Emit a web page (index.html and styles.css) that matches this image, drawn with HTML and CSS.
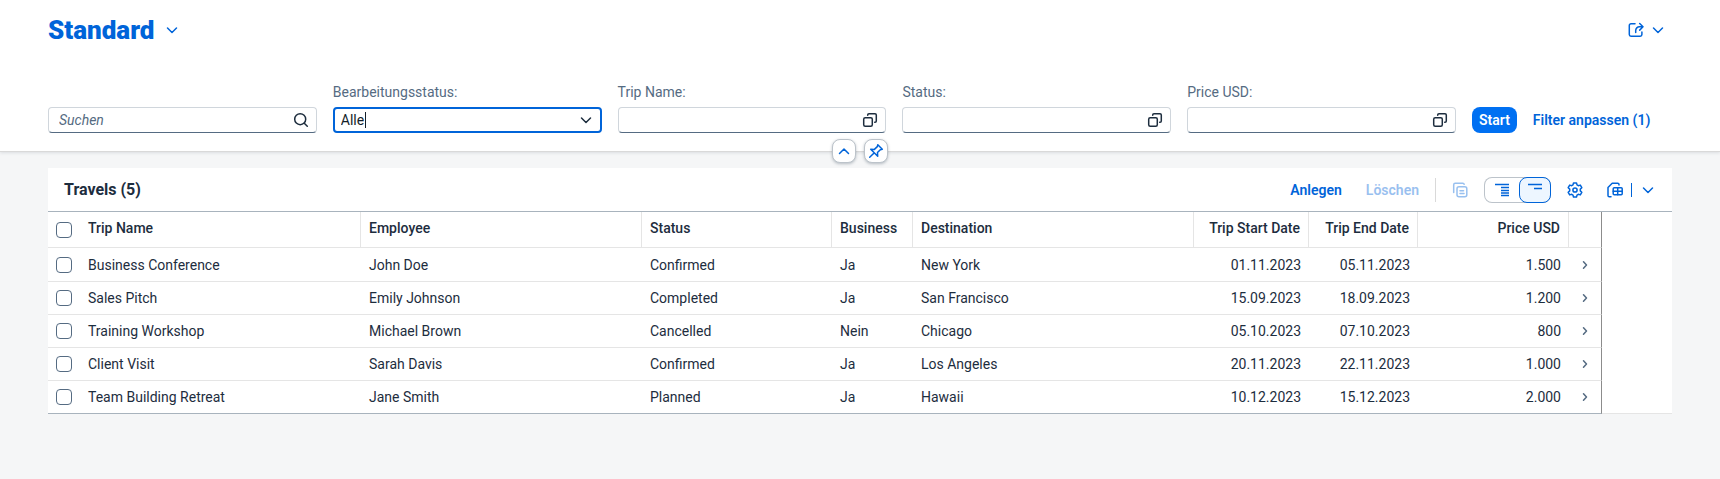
FILE: index.html
```html
<!DOCTYPE html>
<html lang="de">
<head>
<meta charset="utf-8">
<meta name="viewport" content="width=device-width, initial-scale=1">
<title>Travels</title>
<link rel="stylesheet" href="styles.css">
</head>
<body>
<svg class="sprite" aria-hidden="true">
  <symbol id="down" viewBox="0 0 16 16"><path d="M3.500 6l4.500 4.500L12.500 6"/></symbol>
  <symbol id="up" viewBox="0 0 16 16"><path d="M3.500 10.500L8 6l4.500 4.500"/></symbol>
  <symbol id="next" viewBox="0 0 16 16"><path d="M6.500 4.700L9.500 8l-3 3.300"/></symbol>
  <symbol id="search" viewBox="0 0 16 16"><circle cx="7.200" cy="7.200" r="5.500"/><path d="M11.300 11.300l3 3"/></symbol>
  <symbol id="help" viewBox="0 0 16 16"><rect x="1.700" y="5.700" width="8.600" height="8.600" rx="1.500"/><path d="M5.700 3.200V3A1.300 1.300 0 0 1 7 1.700h6A1.300 1.300 0 0 1 14.300 3v6A1.300 1.300 0 0 1 13 10.300h-.3"/></symbol>
  <symbol id="share" viewBox="0 0 16 16"><path d="M7 1.700H3A1.700 1.700 0 0 0 1.300 3.400v9.200A1.700 1.700 0 0 0 3 14.300h9.200a1.700 1.700 0 0 0 1.700-1.700V10M7.700 10.500V8.500a3.700 3.700 0 0 1 3.700-3.700h3M11.700 1.500L15 4.800l-3.300 3.300"/></symbol>
  <symbol id="pin" viewBox="0 0 16 16"><path d="M9.800 1.700l4.500 4.500-2 .5-2.800 2.800.2 3.700-7-7 3.700.2 2.900-2.800zM5.800 10.200L1.700 14.300"/></symbol>
  <symbol id="copy" viewBox="0 0 16 16"><path d="M1.700 10.500V2.800a1.500 1.500 0 0 1 1.500-1.500h7.500a1.500 1.500 0 0 1 1.500 1"/><rect x="5" y="4.700" width="9.800" height="10" rx="2"/><path d="M8 8.700h3.500M8 11.500h4"/></symbol>
  <symbol id="expanded" viewBox="0 0 16 16"><path d="M1 2.500h14M7 5.500h8M7 8.500h8M7 11h8M7 13.500h8"/></symbol>
  <symbol id="collapsed" viewBox="0 0 16 16"><path d="M1 2.500h14M7 6.500h8"/></symbol>
  <symbol id="gear" viewBox="0 0 16 16"><path d="M6.500.9h3l.5 2 1.300.8 2-.6 1.500 2.600-1.500 1.400v1.800l1.500 1.400-1.500 2.600-2-.6-1.300.8-.5 2h-3l-.5-2-1.300-.8-2 .6-1.500-2.600 1.500-1.400V7.100L1.200 5.700l1.500-2.600 2 .6L6 2.900z"/><circle cx="8" cy="8" r="2.100"/></symbol>
  <symbol id="export" viewBox="0 0 16 16"><path d="M4 14.700H2.300a1.300 1.300 0 0 1-1.300-1.300V5.500l4.200-4.200h5.500A1.300 1.300 0 0 1 12 2.600v.4"/><rect x="6.200" y="5.800" width="9" height="7" rx="1"/><path d="M6.200 9.300h9M10.700 5.800v7"/></symbol>
</svg>

<header class="page-header">
  <div class="title-bar">
    <h1 class="variant"><button class="variant-button" type="button">Standard<svg class="icon" aria-hidden="true"><use href="#down"/></svg></button></h1>
    <button class="share" type="button" aria-label="Teilen"><svg class="icon"><use href="#share"/></svg><svg class="icon"><use href="#down"/></svg></button>
  </div>
  <form class="filters">
    <div class="field">
      <div class="control">
        <input class="input search-input" type="search" placeholder="Suchen" aria-label="Suchen">
        <button class="field-icon" type="button" aria-label="Suche starten"><svg class="icon"><use href="#search"/></svg></button>
      </div>
    </div>
    <div class="field">
      <label class="label" for="edit-status">Bearbeitungsstatus:</label>
      <div class="control">
        <input class="input focused" id="edit-status" type="text" role="combobox" aria-expanded="false" value="Alle">
        <span class="caret"></span>
        <button class="field-icon" type="button" aria-label="Auswahl öffnen"><svg class="icon"><use href="#down"/></svg></button>
      </div>
    </div>
    <div class="field">
      <label class="label" for="trip-name">Trip Name:</label>
      <div class="control">
        <input class="input" id="trip-name" type="text">
        <button class="field-icon" type="button" aria-label="Wertehilfe Trip Name"><svg class="icon"><use href="#help"/></svg></button>
      </div>
    </div>
    <div class="field">
      <label class="label" for="status">Status:</label>
      <div class="control">
        <input class="input" id="status" type="text">
        <button class="field-icon" type="button" aria-label="Wertehilfe Status"><svg class="icon"><use href="#help"/></svg></button>
      </div>
    </div>
    <div class="field">
      <label class="label" for="price">Price USD:</label>
      <div class="control">
        <input class="input" id="price" type="text">
        <button class="field-icon" type="button" aria-label="Wertehilfe Price USD"><svg class="icon"><use href="#help"/></svg></button>
      </div>
    </div>
    <div class="filter-actions">
      <button class="go" type="button">Start</button>
      <button class="text-button" type="button">Filter anpassen (1)</button>
    </div>
  </form>
  <div class="header-toggles">
    <button class="toggle" type="button" aria-label="Kopf ausblenden"><svg class="icon"><use href="#up"/></svg></button>
    <button class="toggle" type="button" aria-label="Kopf anheften"><svg class="icon"><use href="#pin"/></svg></button>
  </div>
</header>

<main class="content">
  <div class="toolbar">
    <h2 class="table-title">Travels (5)</h2>
    <div class="tools">
      <button class="text-button" type="button">Anlegen</button>
      <button class="text-button" type="button" disabled>Löschen</button>
      <span class="separator"></span>
      <button class="icon-button" type="button" aria-label="Kopieren" disabled><svg class="icon"><use href="#copy"/></svg></button>
      <div class="segmented">
        <button class="segment" type="button" aria-label="Mehr Spalten"><svg class="icon"><use href="#expanded"/></svg></button>
        <button class="segment selected" type="button" aria-label="Weniger Spalten" aria-pressed="true"><svg class="icon"><use href="#collapsed"/></svg></button>
      </div>
      <button class="icon-button settings" type="button" aria-label="Einstellungen"><svg class="icon"><use href="#gear"/></svg></button>
      <div class="export">
        <button class="icon-button" type="button" aria-label="Exportieren"><svg class="icon"><use href="#export"/></svg></button>
        <span class="split"></span>
        <button class="icon-button" type="button" aria-label="Exportoptionen"><svg class="icon"><use href="#down"/></svg></button>
      </div>
    </div>
  </div>
  <table class="table">
    <colgroup>
      <col class="col-check"><col class="col-wide"><col class="col-wide"><col class="col-status"><col class="col-business"><col class="col-wide"><col class="col-start"><col class="col-end"><col class="col-price"><col class="col-nav"><col>
    </colgroup>
    <thead>
      <tr><th class="check"><input class="checkbox" type="checkbox" aria-label="Alle auswählen"></th><th>Trip Name</th><th>Employee</th><th>Status</th><th>Business</th><th>Destination</th><th class="num">Trip Start Date</th><th class="num">Trip End Date</th><th class="num">Price USD</th><th class="nav"></th><th class="filler"></th></tr>
    </thead>
    <tbody>
      <tr><td class="check"><input class="checkbox" type="checkbox" aria-label="Business Conference"></td><td>Business Conference</td><td>John Doe</td><td>Confirmed</td><td>Ja</td><td>New York</td><td class="num">01.11.2023</td><td class="num">05.11.2023</td><td class="num">1.500</td><td class="nav"><svg class="icon"><use href="#next"/></svg></td><td class="filler"></td></tr>
      <tr><td class="check"><input class="checkbox" type="checkbox" aria-label="Sales Pitch"></td><td>Sales Pitch</td><td>Emily Johnson</td><td>Completed</td><td>Ja</td><td>San Francisco</td><td class="num">15.09.2023</td><td class="num">18.09.2023</td><td class="num">1.200</td><td class="nav"><svg class="icon"><use href="#next"/></svg></td><td class="filler"></td></tr>
      <tr><td class="check"><input class="checkbox" type="checkbox" aria-label="Training Workshop"></td><td>Training Workshop</td><td>Michael Brown</td><td>Cancelled</td><td>Nein</td><td>Chicago</td><td class="num">05.10.2023</td><td class="num">07.10.2023</td><td class="num">800</td><td class="nav"><svg class="icon"><use href="#next"/></svg></td><td class="filler"></td></tr>
      <tr><td class="check"><input class="checkbox" type="checkbox" aria-label="Client Visit"></td><td>Client Visit</td><td>Sarah Davis</td><td>Confirmed</td><td>Ja</td><td>Los Angeles</td><td class="num">20.11.2023</td><td class="num">22.11.2023</td><td class="num">1.000</td><td class="nav"><svg class="icon"><use href="#next"/></svg></td><td class="filler"></td></tr>
      <tr><td class="check"><input class="checkbox" type="checkbox" aria-label="Team Building Retreat"></td><td>Team Building Retreat</td><td>Jane Smith</td><td>Planned</td><td>Ja</td><td>Hawaii</td><td class="num">10.12.2023</td><td class="num">15.12.2023</td><td class="num">2.000</td><td class="nav"><svg class="icon"><use href="#next"/></svg></td><td class="filler"></td></tr>
    </tbody>
  </table>
</main>
</body>
</html>
```

FILE: styles.css
```css
:root {
  --blue: #0064d9;
  --text: #1d2d3e;
  --label: #556b82;
  --line: #e5e5e5;
  --strong-line: #a8b3bd;
}

* { box-sizing: border-box; }

body {
  margin: 0;
  background: #f5f6f7;
  color: var(--text);
  font: 14px/16px Roboto, "Liberation Sans", sans-serif;
}

button {
  margin: 0;
  padding: 0;
  border: 0;
  background: none;
  color: var(--blue);
  font: inherit;
  cursor: pointer;
}

button:disabled { opacity: 0.4; cursor: default; }

.sprite { position: absolute; width: 0; height: 0; }

.icon {
  display: block;
  flex: none;
  width: 16px;
  height: 16px;
  fill: none;
  stroke: currentColor;
  stroke-width: 1.5;
  stroke-linecap: round;
  stroke-linejoin: round;
}

.page-header {
  position: relative;
  padding: 14px 48px 18px;
  border-bottom: 1px solid #d9d9d9;
  background: #fff;
  box-shadow: 0 1px 3px rgba(34, 53, 72, 0.12);
}

.title-bar {
  display: flex;
  align-items: center;
  justify-content: space-between;
}

.variant { margin: 0; }

.variant-button {
  display: flex;
  align-items: center;
  gap: 10px;
  font-size: 26px;
  font-weight: 900;
  line-height: 32px;
}

.share {
  display: flex;
  gap: 6px;
  padding-right: 6px;
}

.filters {
  display: grid;
  grid-template-columns: repeat(5, minmax(0, 1fr)) 200px;
  align-items: end;
  gap: 16px;
  margin-top: 38px;
}

.field { display: grid; gap: 7px; }

.label { color: var(--label); }

.control { position: relative; display: flex; }

.input {
  width: 100%;
  height: 26px;
  padding: 0 32px 0 8px;
  border: 1px solid #d0d6dc;
  border-bottom-color: var(--label);
  border-radius: 4px;
  background: #fff;
  color: #131e29;
  font: inherit;
  outline: 0;
  appearance: none;
}

.search-input { padding-left: 10px; }

.input::placeholder {
  color: var(--label);
  font-style: italic;
  opacity: 1;
}

.input.focused { padding-left: 6px; border: 2px solid var(--blue); }

.caret {
  position: absolute;
  top: 5px;
  left: 32px;
  width: 1px;
  height: 16px;
  background: #131e29;
}

.field-icon {
  position: absolute;
  top: 5px;
  right: 8px;
  color: var(--text);
}

.filter-actions { display: flex; gap: 16px; }

.go,
.text-button {
  height: 26px;
  font-weight: 600;
  white-space: nowrap;
}

.go {
  padding: 0 7px;
  border-radius: 8px;
  background: #0070f2;
  color: #fff;
}

.header-toggles {
  position: absolute;
  bottom: -12px;
  left: 50%;
  display: flex;
  gap: 8px;
  transform: translateX(-50%);
}

.toggle {
  display: grid;
  place-items: center;
  width: 24px;
  height: 24px;
  border: 1px solid #bcc3ca;
  border-radius: 8px;
  background: #fff;
  box-shadow: 0 1px 3px rgba(34, 53, 72, 0.3);
}

.content {
  margin: 16px 48px;
  background: #fff;
}

.toolbar {
  display: flex;
  align-items: center;
  justify-content: space-between;
  height: 43px;
  padding: 0 16px;
}

.table-title {
  margin: 0;
  font-size: 16px;
  line-height: 20px;
}

.tools { display: flex; align-items: center; }

.tools .text-button { margin-right: 24px; }
.tools .text-button:disabled { margin-right: 16px; }

.separator {
  width: 1px;
  height: 24px;
  margin-right: 16px;
  background: #d9d9d9;
}

.segmented {
  display: flex;
  margin: 0 16px;
  border-radius: 8px;
  box-shadow: inset 0 0 0 1px #bcc3ca;
}

.segment {
  display: grid;
  place-items: center;
  width: 35px;
  height: 26px;
  color: var(--blue);
}

.segment .icon { stroke-linecap: butt; }

.segment.selected {
  width: 32px;
  border: 1px solid var(--blue);
  border-radius: 8px;
  background: #edf6ff;
}

.settings { margin-right: 24px; }

.export { display: flex; align-items: center; gap: 8px; }

.split { width: 1px; height: 14px; background: var(--blue); }

.table {
  width: 100%;
  border-collapse: separate;
  border-spacing: 0;
  table-layout: fixed;
  border-top: 1px solid var(--strong-line);
}

.col-check { width: 32px; }
.col-wide { width: 281px; }
.col-status { width: 190px; }
.col-business { width: 81px; }
.col-start { width: 115px; }
.col-end { width: 109px; }
.col-price { width: 151px; }
.col-nav { width: 33px; }

th,
td {
  height: 33px;
  padding: 0 8px;
  border-bottom: 1px solid var(--line);
  text-align: left;
  white-space: nowrap;
}

th {
  height: 36px;
  padding-bottom: 4px;
  border-right: 1px solid var(--line);
  font-weight: 500;
}

.num { text-align: right; }

.check { padding: 0 8px; border-right: 0; }

.nav { border-right: 1px solid #8c8c8c; color: var(--label); }

.filler { border-right: 0; border-bottom: 0; }

tbody tr:first-child td { height: 34px; }

tbody tr:last-child td { border-bottom-color: var(--strong-line); }

tbody tr:last-child .filler { border-bottom: 1px solid var(--line); }

.checkbox {
  display: block;
  width: 16px;
  height: 16px;
  margin: 0;
  border: 1px solid var(--label);
  border-radius: 4px;
  background: #fff;
  appearance: none;
}
```
